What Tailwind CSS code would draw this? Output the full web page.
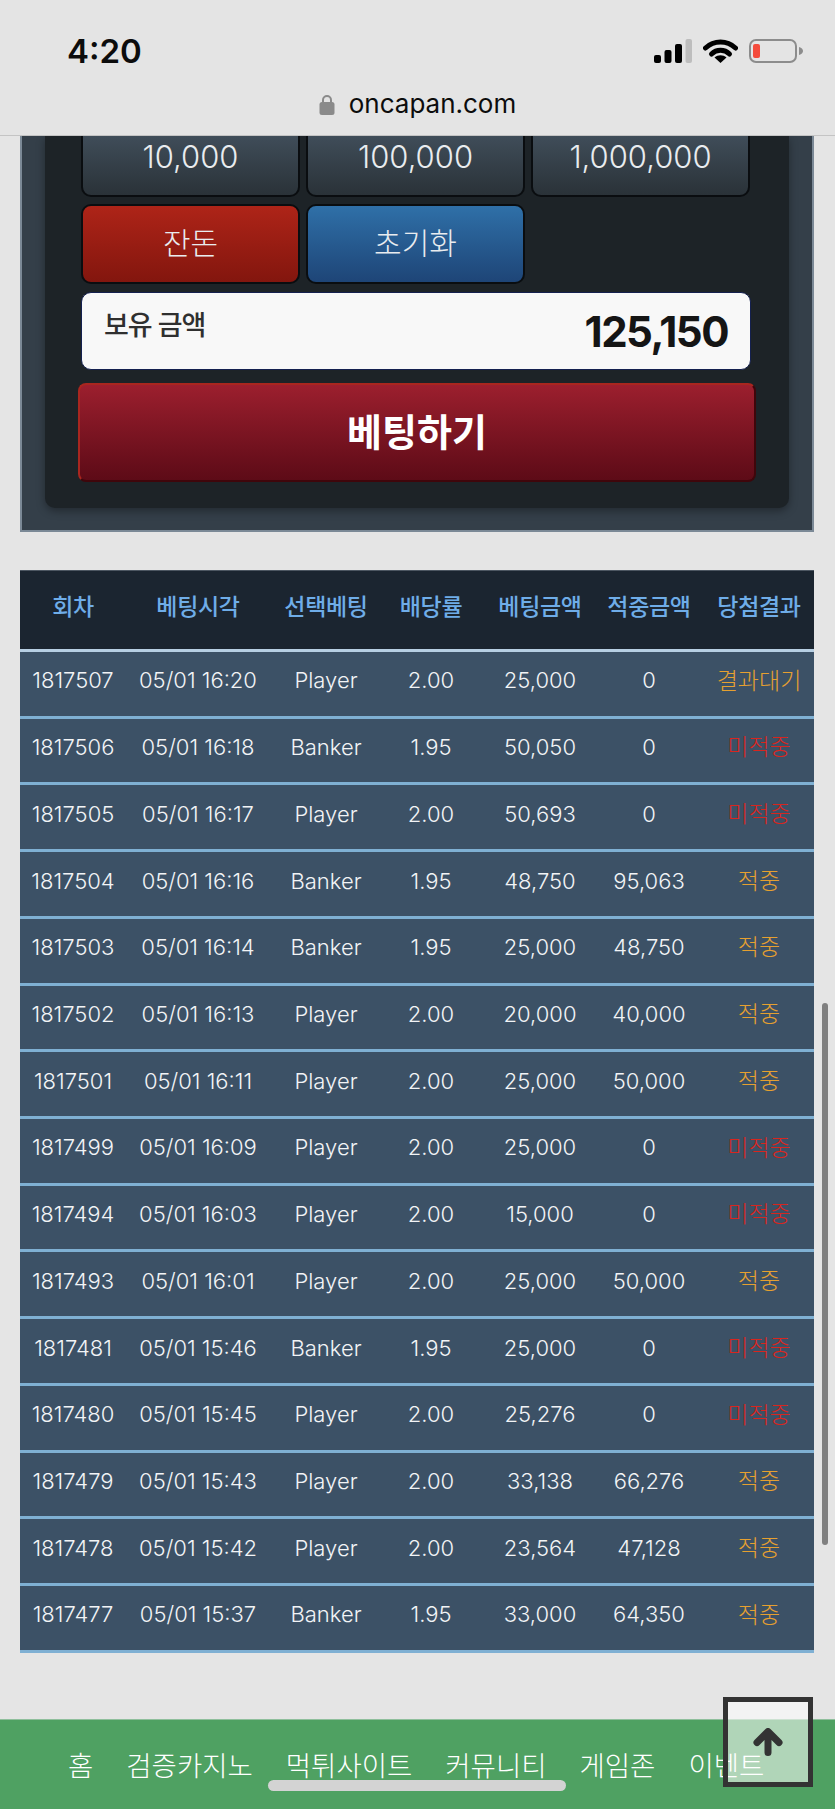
<!DOCTYPE html>
<html lang="ko">
<head>
  <meta charset="UTF-8" />
  <title>oncapan.com</title>
  <script src="https://cdn.jsdelivr.net/npm/@tailwindcss/browser@4"></script>
</head>
<body class="relative h-[1809px] w-[835px] overflow-hidden bg-[#e5e5e5] font-['Noto_Sans','Noto_Sans_CJK_KR',sans-serif]">

  <!-- 상단 상태바 -->
  <header class="relative h-[136px] border-b border-[#c4c4c4] bg-[#e4e4e4] font-['Inter',sans-serif] text-[#0c0c0c]">
    <div class="flex h-[92px] items-start justify-between pl-[67px] pr-[32px] pt-[31px]">
      <span class="text-[33px] font-semibold leading-[40px]">4:20</span>
      <div class="flex items-start gap-[11px] pt-[8px]">
        <svg width="38" height="24" viewBox="0 0 38 24">
          <rect x="0" y="16" width="7" height="8" rx="2" fill="#000" />
          <rect x="10.500" y="11" width="7" height="13" rx="2" fill="#000" />
          <rect x="21" y="5" width="7" height="19" rx="2" fill="#000" />
          <rect x="31.500" y="0" width="6.500" height="24" rx="2" fill="#bdbdbd" />
        </svg>
        <svg width="35" height="24" viewBox="0 0 35 24">
          <path d="M2.500 9C11 1 24 1 32.500 9" fill="none" stroke="#000" stroke-width="5" stroke-linecap="round" />
          <path d="M8.500 15C13.500 10 21.500 10 26.500 15" fill="none" stroke="#000" stroke-width="5" stroke-linecap="round" />
          <path d="M11.500 18.500C15 15.500 20 15.500 23.500 18.500L17.500 24Z" fill="#000" />
        </svg>
        <svg width="54" height="24" viewBox="0 0 54 24">
          <rect x="1" y="1" width="46" height="22" rx="6" fill="none" stroke="#8c8c8c" stroke-width="2" />
          <rect x="4" y="5" width="7" height="14" rx="2" fill="#f44b3c" />
          <path d="M50 8C53 9 54 10.500 54 12C54 13.500 53 15 50 16Z" fill="#8c8c8c" />
        </svg>
      </div>
    </div>
    <div class="flex items-center justify-center gap-[14px]">
      <svg width="16" height="21" viewBox="0 0 16 21">
        <path d="M4 9V6a4 4 0 0 1 8 0v3" fill="none" stroke="#8a8a8a" stroke-width="2" />
        <rect x="0.500" y="8" width="15" height="13" rx="2.500" fill="#8a8a8a" />
      </svg>
      <span class="text-[26px] leading-[24px]">oncapan.com</span>
    </div>
  </header>

  <main class="h-[1583px] overflow-hidden pl-[20px] pr-[21px]">
    <!-- 베팅 패널 -->
    <section class="h-[396px] border-x-2 border-b-2 border-[#7b8996] bg-[#343f49] px-[23px]">
      <div class="flex h-[372px] flex-col rounded-b-[10px] bg-[#1d2327] pl-[33px] pr-[33px] shadow-[0_3px_8px_rgba(0,0,0,0.35)]">
        <div class="-mt-[19px] mb-[8px] ml-[3px] mr-[6px] grid grid-cols-3 gap-x-[6px] gap-y-[7px] font-['Inter','Noto_Sans_CJK_KR',sans-serif] text-[31px] font-light text-[#e9ecef]">
          <button class="flex h-[80px] items-center justify-center rounded-[10px] border-2 border-[#0a0d10] bg-gradient-to-b from-[#465563] to-[#2a3238] pt-[1px]">10,000</button>
          <button class="flex h-[80px] items-center justify-center rounded-[10px] border-2 border-[#0a0d10] bg-gradient-to-b from-[#465563] to-[#2a3238] pt-[1px]">100,000</button>
          <button class="flex h-[80px] items-center justify-center rounded-[10px] border-2 border-[#0a0d10] bg-gradient-to-b from-[#465563] to-[#2a3238] pt-[1px]">1,000,000</button>
          <button class="flex h-[80px] items-center justify-center rounded-[10px] border-2 border-[#0a0d10] bg-gradient-to-b from-[#ae2418] to-[#83160e] pb-[2px] text-[30px]">잔돈</button>
          <button class="flex h-[80px] items-center justify-center rounded-[10px] border-2 border-[#0a0d10] bg-gradient-to-b from-[#2f70a8] to-[#1e4577] pb-[2px] text-[30px]">초기화</button>
        </div>
        <div class="ml-[3px] mr-[5px] flex h-[78px] items-center justify-between rounded-[10px] border border-[#14204f] bg-[#f8f8f8] pl-[22px] pr-[22px]">
          <span class="pb-[12px] text-[27px] font-medium tracking-[-1px] text-[#2f2f2f]">보유 금액</span>
          <span class="font-['Inter',sans-serif] text-[42px] font-bold tracking-[-1.5px] text-[#151515]">125,150</span>
        </div>
        <button class="mt-[13px] flex h-[99px] w-full items-center justify-center rounded-[8px] border-2 border-t-[#a9261f] border-l-[#a9261f] border-r-[#3f060b] border-b-[#3f060b] bg-gradient-to-b from-[#9c1f2e] to-[#5d0b17] pb-[3px] text-[38px] font-bold text-white">베팅하기</button>
      </div>
    </section>

    <!-- 베팅 내역 -->
    <section class="mt-[38px] text-center">
      <div class="grid h-[82px] grid-cols-[106px_144px_112px_98px_120px_98px_116px] items-center border-t border-b-[3px] border-t-[#4c5661] border-b-[#b7cfe3] bg-[#1b2530] pb-[7px] text-[23px] font-medium tracking-[-0.3px] text-[#6fade8]">
        <div>회차</div>
        <div>베팅시각</div>
        <div>선택베팅</div>
        <div>배당률</div>
        <div>베팅금액</div>
        <div>적중금액</div>
        <div class="pl-[6px]">당첨결과</div>
      </div>
      <div id="rows"></div>
    </section>
  </main>

  <!-- 하단 메뉴 -->
  <nav class="flex h-[90px] items-start gap-[33px] border-t border-[#8fbf9c] bg-[#4fa162] pl-[68px] pt-[26px] text-[27.500px] font-light leading-[40px] text-white">
    <a>홈</a>
    <a>검증카지노</a>
    <a>먹튀사이트</a>
    <a>커뮤니티</a>
    <a>게임존</a>
    <a>이벤트</a>
  </nav>

  <!-- 겹치는 요소들 -->
  <div class="absolute left-[822px] top-[1003px] h-[542px] w-[6px] rounded-full bg-[#808080]"></div>
  <button class="absolute left-[723px] top-[1697px] flex h-[90px] w-[90px] items-start justify-center border-[5px] border-[#333333] bg-white/55 pt-[26px]">
    <svg width="30" height="28" viewBox="0 0 30 28">
      <path d="M15 24.500V5M4 14.500L15 3.500L26 14.500" fill="none" stroke="#333333" stroke-width="7" stroke-linecap="round" stroke-linejoin="round" />
    </svg>
  </button>
  <div class="absolute left-[268px] top-[1780px] h-[11px] w-[298px] rounded-full bg-[#d3d3d3]"></div>

  <script>
    const rows = [
      ['1817507', '05/01 16:20', 'Player', '2.00', '25,000', '0', '결과대기'],
      ['1817506', '05/01 16:18', 'Banker', '1.95', '50,050', '0', '미적중'],
      ['1817505', '05/01 16:17', 'Player', '2.00', '50,693', '0', '미적중'],
      ['1817504', '05/01 16:16', 'Banker', '1.95', '48,750', '95,063', '적중'],
      ['1817503', '05/01 16:14', 'Banker', '1.95', '25,000', '48,750', '적중'],
      ['1817502', '05/01 16:13', 'Player', '2.00', '20,000', '40,000', '적중'],
      ['1817501', '05/01 16:11', 'Player', '2.00', '25,000', '50,000', '적중'],
      ['1817499', '05/01 16:09', 'Player', '2.00', '25,000', '0', '미적중'],
      ['1817494', '05/01 16:03', 'Player', '2.00', '15,000', '0', '미적중'],
      ['1817493', '05/01 16:01', 'Player', '2.00', '25,000', '50,000', '적중'],
      ['1817481', '05/01 15:46', 'Banker', '1.95', '25,000', '0', '미적중'],
      ['1817480', '05/01 15:45', 'Player', '2.00', '25,276', '0', '미적중'],
      ['1817479', '05/01 15:43', 'Player', '2.00', '33,138', '66,276', '적중'],
      ['1817478', '05/01 15:42', 'Player', '2.00', '23,564', '47,128', '적중'],
      ['1817477', '05/01 15:37', 'Banker', '1.95', '33,000', '64,350', '적중']
    ];

    document.getElementById('rows').innerHTML = rows.map(r => {
      const color = r[6] === '미적중' ? 'text-[#d8261f]' : 'text-[#e6a030]';
      return `<div class="grid h-[66.730px] grid-cols-[106px_144px_112px_98px_120px_98px_116px] items-center border-b-[3px] border-[#7fb0d3] bg-[#3c5166] pb-[6px] font-['Inter','Noto_Sans_CJK_KR',sans-serif] text-[22px] font-light text-[#f2f4f6]">
        <div>${r[0]}</div><div>${r[1]}</div><div>${r[2]}</div><div>${r[3]}</div><div>${r[4]}</div><div>${r[5]}</div>
        <div class="pl-[6px] text-[23px] ${color}">${r[6]}</div>
      </div>`;
    }).join('');
  </script>
</body>
</html>
